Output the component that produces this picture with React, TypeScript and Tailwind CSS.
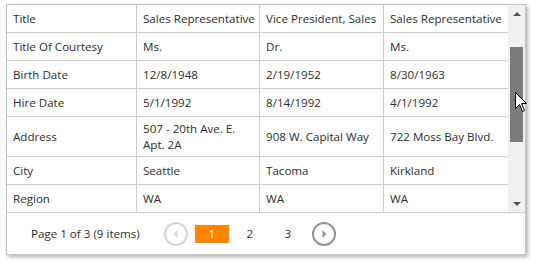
import React from 'react';

const rows: { label: string; values: string[]; tall?: boolean }[] = [
    { label: 'Title', values: ['Sales Representative', 'Vice President, Sales', 'Sales Representative'] },
    { label: 'Title Of Courtesy', values: ['Ms.', 'Dr.', 'Ms.'] },
    { label: 'Birth Date', values: ['12/8/1948', '2/19/1952', '8/30/1963'] },
    { label: 'Hire Date', values: ['5/1/1992', '8/14/1992', '4/1/1992'] },
    { label: 'Address', values: ['507 - 20th Ave. E. Apt. 2A', '908 W. Capital Way', '722 Moss Bay Blvd.'], tall: true },
    { label: 'City', values: ['Seattle', 'Tacoma', 'Kirkland'] },
    { label: 'Region', values: ['WA', 'WA', 'WA'] },
];

const colWidths = ['w-[130px]', 'w-[123px]', 'w-[124px]', 'w-[124px]'];

function ArrowCircle({ dir, disabled }: { dir: 'left' | 'right'; disabled?: boolean }) {
    const color = disabled ? '#d6d6d6' : '#929292';
    return (
        <svg width="24" height="24" viewBox="0 0 24 24">
            <circle cx="12" cy="12" r="11" fill="white" stroke={color} strokeWidth="2" />
            {dir === 'left' ? (
                <path d="M9.5 12 L13.5 8 L13.5 16 Z" fill={color} />
            ) : (
                <path d="M14.5 12 L10.5 8 L10.5 16 Z" fill={color} />
            )}
        </svg>
    );
}

export default function App() {
    return (
        <div className="relative w-[536px] h-[267px] bg-white pt-[4px] pl-[6px] font-['Segoe_UI','Open_Sans',sans-serif] text-[11.6px] text-[#2e2e2e]">
            <div className="w-[520px] h-[251px] border border-[#c3c3c3] bg-white flex flex-col shadow-[2px_2px_4px_rgba(0,0,0,0.3)]">
                {/* Grid */}
                <div className="flex h-[207px]">
                    <div className="flex flex-col w-[501px]">
                        {rows.map((row, i) => (
                            <div
                                key={row.label}
                                className={`flex ${row.tall ? 'h-[40px]' : i === rows.length - 1 ? 'h-[27px]' : 'h-[28px]'} ${i === rows.length - 1 ? '' : 'border-b border-[#cccccc]'}`}
                            >
                                {[row.label, ...row.values].map((v, j) => (
                                    <div
                                        key={j}
                                        className={`${colWidths[j]} shrink-0 flex items-center px-[6px] leading-[16px] ${row.tall ? '' : 'whitespace-nowrap'} ${j < 3 ? 'border-r border-[#cccccc]' : ''}`}
                                    >
                                        {v}
                                    </div>
                                ))}
                            </div>
                        ))}
                    </div>
                    {/* Scrollbar */}
                    <div className="w-[17px] bg-[#f0f0f0] flex flex-col">
                        <div className="h-[17px] flex items-center justify-center">
                            <svg width="8" height="4" viewBox="0 0 8 4">
                                <path d="M0 4 L4 0 L8 4 Z" fill="#555" />
                            </svg>
                        </div>
                        <div className="flex-1 px-[2px]">
                            <div className="mt-[25px] h-[95px] bg-[#7b7b7b]" />
                        </div>
                        <div className="h-[17px] flex items-center justify-center">
                            <svg width="8" height="4" viewBox="0 0 8 4">
                                <path d="M0 0 L8 0 L4 4 Z" fill="#555" />
                            </svg>
                        </div>
                    </div>
                </div>
                {/* Pager */}
                <div className="h-[42px] border-t border-[#cccccc] flex items-center pl-[24px]">
                    <span className="mr-[24px]">Page 1 of 3 (9 items)</span>
                    <ArrowCircle dir="left" disabled />
                    <div className="flex items-center gap-[4px] ml-[7px] mr-[7px]">
                        <div className="w-[34px] h-[18px] bg-[#ff8400] text-white flex items-center justify-center">1</div>
                        <div className="w-[34px] h-[18px] flex items-center justify-center">2</div>
                        <div className="w-[34px] h-[18px] flex items-center justify-center">3</div>
                    </div>
                    <ArrowCircle dir="right" />
                </div>
            </div>
            {/* Mouse cursor */}
            <svg className="absolute left-[515px] top-[92px]" width="13" height="21" viewBox="0 0 13 21">
                <path d="M0.5 0.5 L0.5 16.5 L4.5 12.5 L7.5 19.5 L9.5 18.5 L6.5 11.5 L11.5 11.5 Z" fill="white" stroke="black" strokeWidth="1" strokeLinejoin="miter" />
            </svg>
        </div>
    );
}
